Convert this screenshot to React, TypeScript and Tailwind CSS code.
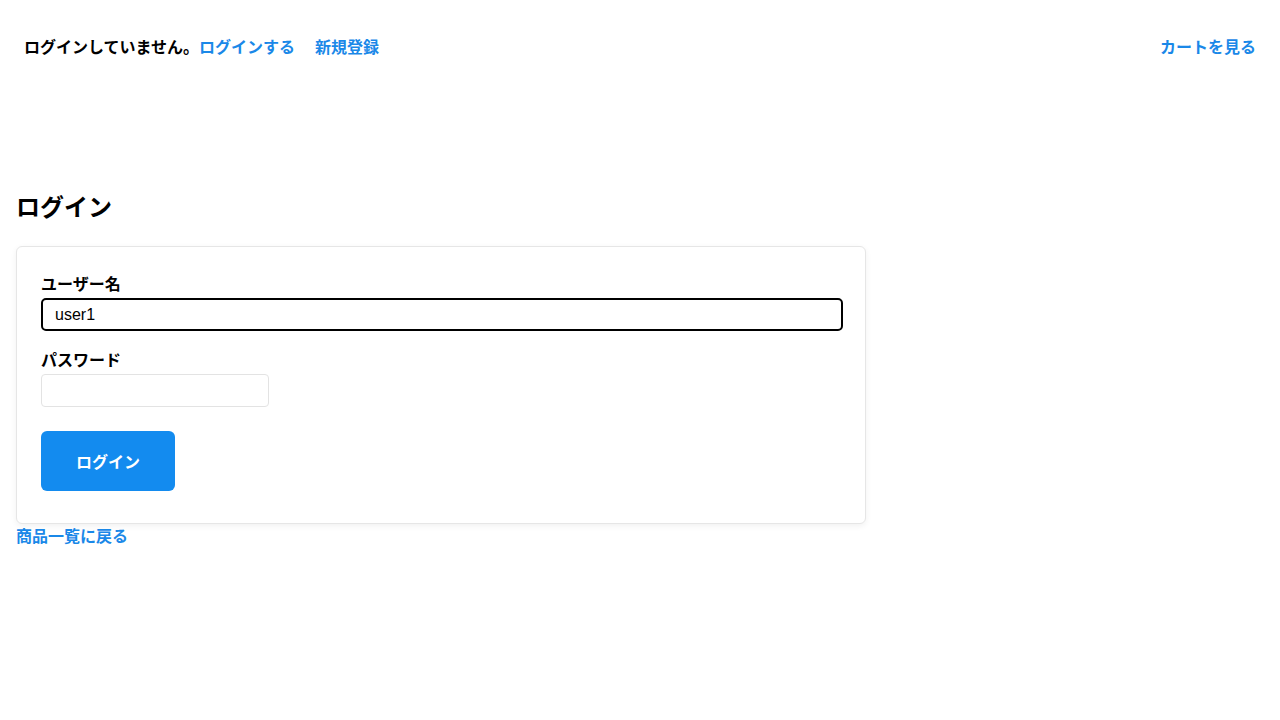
import { useState } from 'react'

export default function App() {
  const [username, setUsername] = useState('user1')
  const [password, setPassword] = useState('')

  return (
    <div className="min-h-screen bg-white text-black font-['Liberation_Sans','Noto_Sans_CJK_JP',sans-serif]">
      {/* header */}
      <header className="flex items-center justify-between px-6 pt-9 pb-6">
        <div className="flex items-center text-base font-bold leading-6">
          <span>ログインしていません。</span>
          <a href="#" className="text-[#1a88e8]">ログインする</a>
          <a href="#" className="ml-5 text-[#1a88e8]">新規登録</a>
        </div>
        <a href="#" className="text-base font-bold leading-6 text-[#1a88e8]">カートを見る</a>
      </header>

      <main className="px-4 pt-[108px]">
        <h2 className="mb-[22px] text-2xl font-bold leading-8">ログイン</h2>

        <form
          className="w-[850px] rounded-md border border-[#e6e6e6] bg-white px-6 pt-[26px] pb-8 shadow-[0_2px_6px_rgba(0,0,0,0.06)]"
          onSubmit={e => e.preventDefault()}
        >
          <label className="block text-base font-bold leading-6">ユーザー名</label>
          <input
            type="text"
            value={username}
            onChange={e => setUsername(e.target.value)}
            className="mt-px block h-[33px] w-[802px] rounded-[5px] border-2 border-black px-3 text-base text-black outline-none"
          />

          <label className="mt-[18px] block text-base font-bold leading-6">パスワード</label>
          <input
            type="password"
            value={password}
            onChange={e => setPassword(e.target.value)}
            className="mt-px block h-[33px] w-[228px] rounded-[4px] border border-[#e3e3e3] px-3 text-base outline-none"
          />

          <button
            type="submit"
            className="mt-6 block h-[60px] w-[134px] rounded-md bg-[#138bef] pt-1 text-base font-bold text-white"
          >
            ログイン
          </button>
        </form>

        <a href="#" className="mt-px block text-base font-bold leading-6 text-[#1a88e8]">商品一覧に戻る</a>
      </main>
    </div>
  )
}
